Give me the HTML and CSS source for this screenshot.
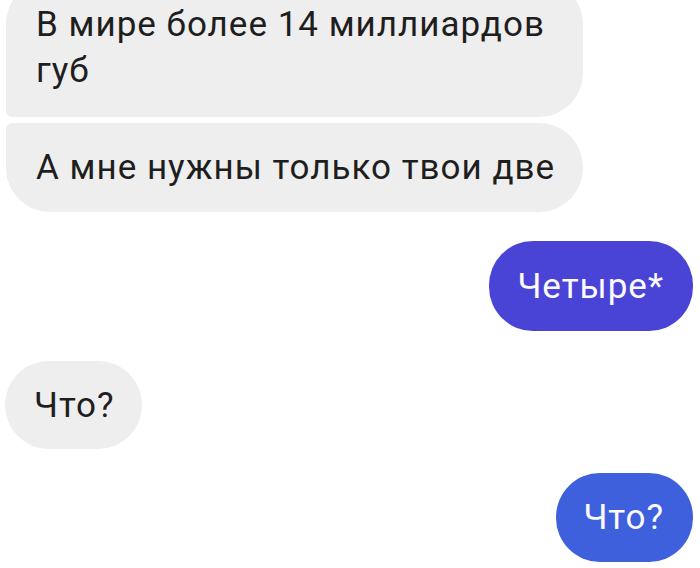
FILE: index.html
```html
<!DOCTYPE html>
<html lang="ru">
  <head>
    <meta charset="UTF-8" />
    <title>Чат</title>
    <meta name="viewport" content="width=device-width, initial-scale=1.0" />
    <link rel="stylesheet" href="styles.css">
  </head>

  <body>
    <div class="chat">
      <div class="msg-group msg-group-in">
        <div class="bubble bubble-in bubble-first">
          В мире более 14 миллиардов<br />губ
        </div>
        <div class="bubble bubble-in bubble-last">
          А мне нужны только твои две
        </div>
      </div>

      <div class="msg-group msg-group-out gap-1">
        <div class="bubble bubble-out bubble-purple">Четыре*</div>
      </div>

      <div class="msg-group msg-group-in gap-2">
        <div class="bubble bubble-in bubble-single">Что?</div>
      </div>

      <div class="msg-group msg-group-out gap-3">
        <div class="bubble bubble-out bubble-blue">Что?</div>
      </div>
    </div>
  </body>
</html>
```

FILE: styles.css
```css
:root {
  --in-bg: #eeeeee;
  --in-text: #1e1e1e;
  --out-purple: #4a44d6;
  --out-blue: #3f60dc;
  --radius-big: 44px;
  --radius-small: 6px;
}

html,
body {
  margin: 0;
  background: #fff;
  font-family: Roboto, "Noto Sans", Arial, sans-serif;
  overflow: hidden;
}

.chat {
  display: flex;
  flex-direction: column;
  margin-top: -20px;
  padding: 0 7px 0 6px;
}

.msg-group {
  display: flex;
  flex-direction: column;
  gap: 6px;
}

.msg-group-in {
  align-items: flex-start;
}

.msg-group-out {
  align-items: flex-end;
}

.gap-1 {
  margin-top: 29px;
}

.gap-2 {
  margin-top: 30px;
}

.gap-3 {
  margin-top: 24px;
}

.bubble {
  box-sizing: border-box;
  font-size: 35px;
  line-height: 46px;
  letter-spacing: 1px;
  padding: 22px 30px 21px 30px;
  border-radius: var(--radius-big);
  white-space: nowrap;
}

.bubble-in {
  background: var(--in-bg);
  color: var(--in-text);
}

.bubble-first {
  padding-bottom: 23px;
  border-bottom-left-radius: var(--radius-small);
  width: 577px;
}

.bubble-last {
  border-top-left-radius: var(--radius-small);
  width: 577px;
}

.bubble-single {
  margin-left: -1px;
  padding: 22px 27px 20px 29px;
}

.bubble-out {
  color: #fbfbff;
  padding: 22px 29px 21px 29px;
}

.bubble-purple {
  background: var(--out-purple);
  padding: 23px 29px 21px 28px;
}

.bubble-blue {
  background: var(--out-blue);
  padding: 22px 29px 21px 27px;
}
```
